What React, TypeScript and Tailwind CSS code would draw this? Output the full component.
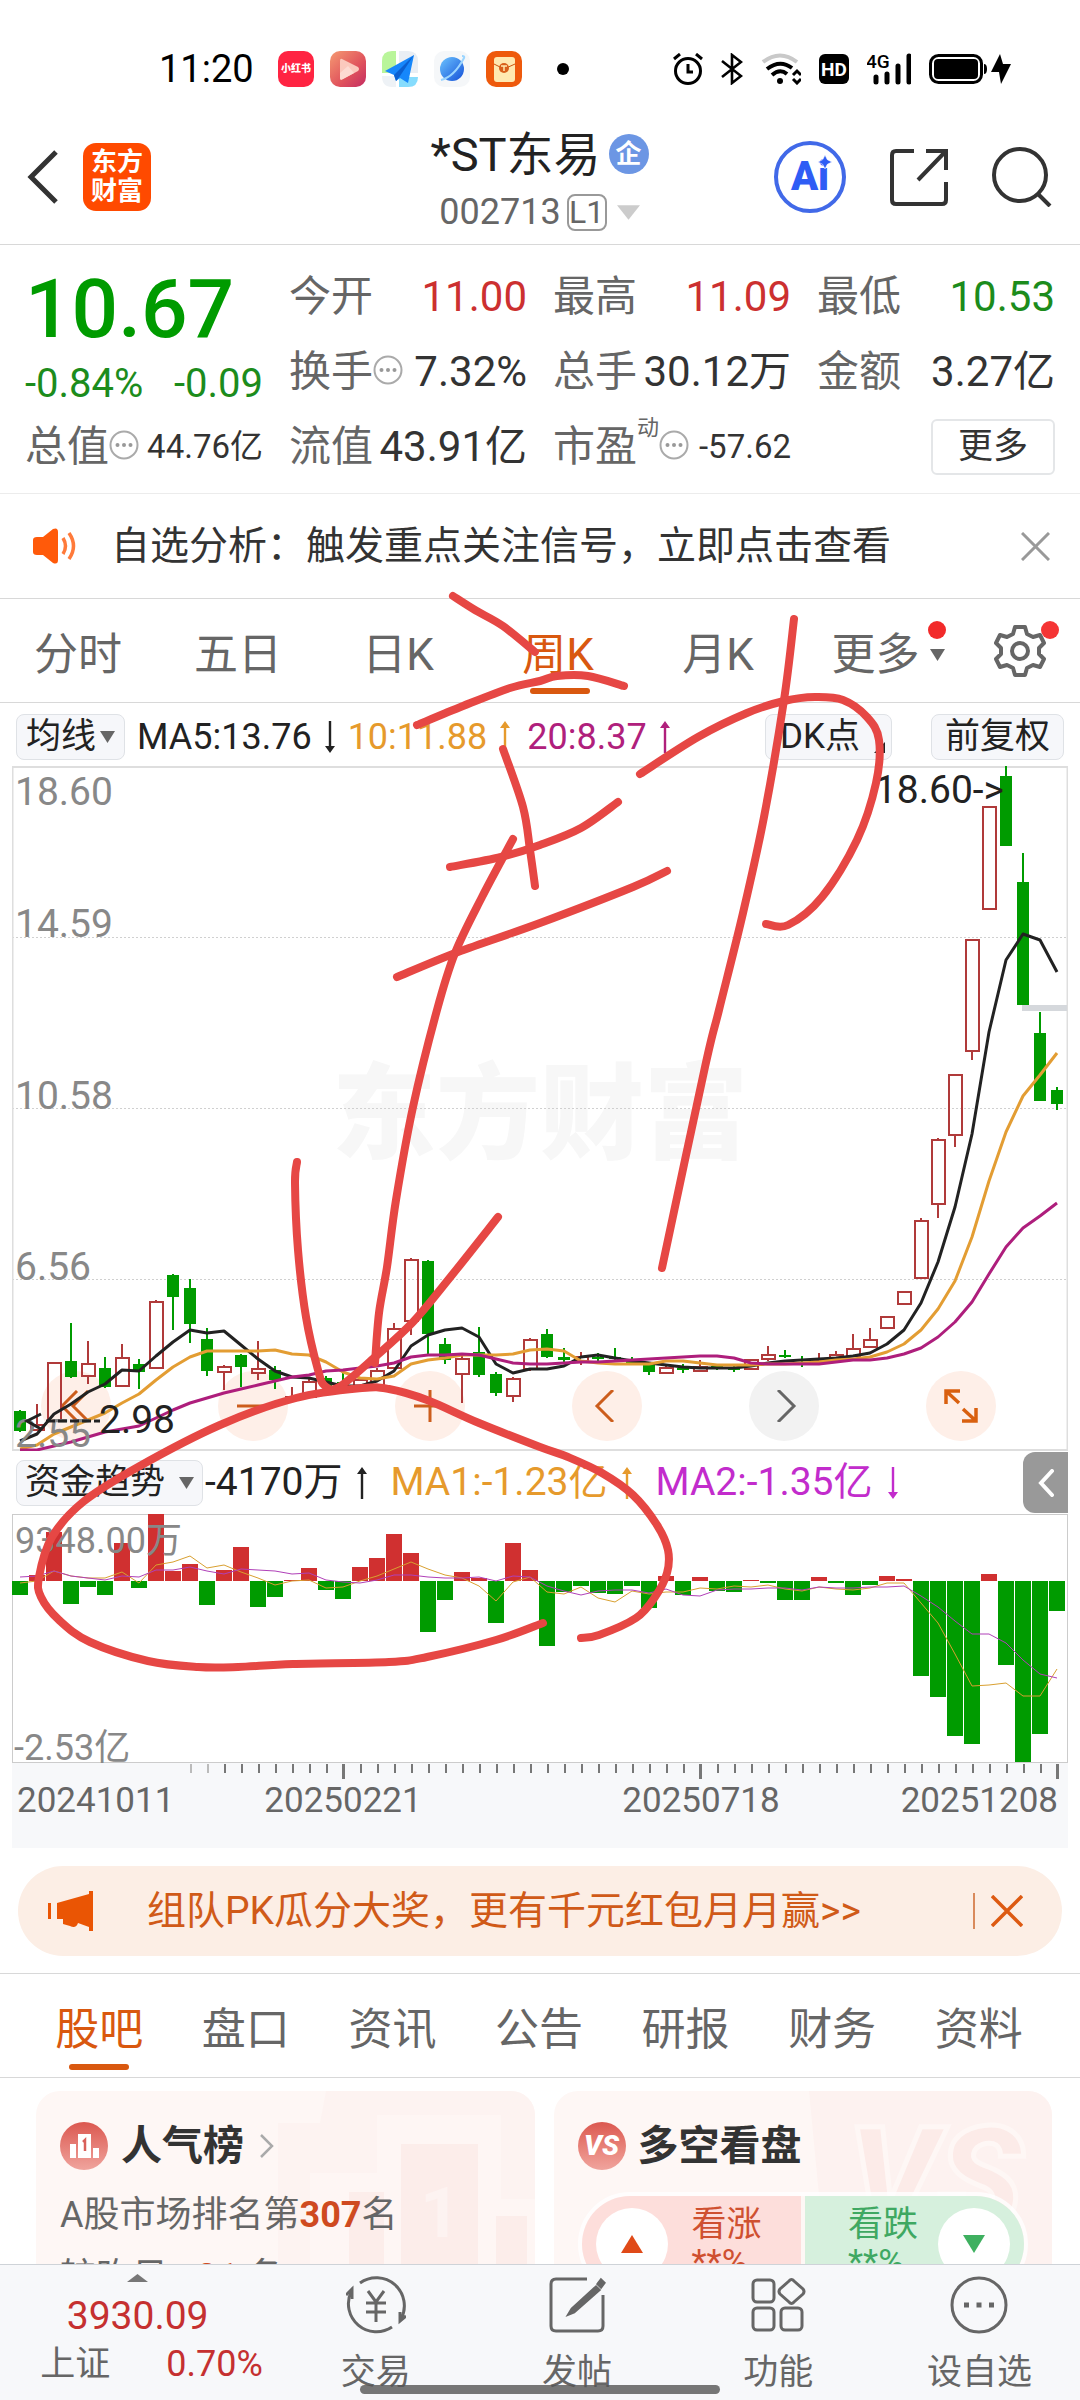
import type { ReactNode } from "react";
import clsx from "clsx";

type Point = [number, number];
// high, body top, body bottom, low, "r" rising / "g" falling
type Candle = [number, number, number, number, "r" | "g"];

const STEP = 17;
const xAt = (index: number) => 8 + index * STEP;

const candles: Candle[] = [
  [644, 645, 665, 666, "g"], [638, 658, 664, 665, "r"], [596, 596, 655, 655, "r"], [557, 595, 611, 612, "g"],
  [575, 597, 610, 618, "r"], [591, 602, 621, 622, "g"], [578, 591, 620, 620, "r"], [593, 598, 606, 623, "g"],
  [534, 535, 602, 603, "r"], [508, 509, 531, 564, "g"], [513, 522, 558, 577, "g"], [562, 573, 605, 610, "g"],
  [599, 600, 606, 624, "r"], [588, 589, 601, 621, "g"], [575, 602, 607, 614, "r"], [600, 604, 614, 623, "g"],
  [621, 630, 633, 634, "r"], [612, 615, 631, 632, "r"], [610, 612, 620, 622, "g"], [606, 616, 622, 623, "g"],
  [611, 613, 622, 623, "r"], [602, 604, 620, 621, "r"], [557, 562, 602, 603, "r"], [492, 493, 555, 569, "r"],
  [494, 495, 568, 589, "g"], [572, 578, 594, 598, "g"], [590, 592, 608, 637, "r"], [561, 586, 609, 611, "g"],
  [606, 608, 627, 630, "g"], [611, 612, 630, 636, "r"], [572, 573, 603, 605, "r"], [563, 568, 591, 592, "g"],
  [582, 591, 594, 596, "g"], [586, 590, 595, 599, "r"], [587, 591, 593, 596, "g"], [582, 591, 593, 595, "g"],
  [591, 595, 598, 599, "g"], [598, 599, 606, 609, "g"], [600, 601, 607, 608, "r"], [598, 602, 604, 607, "g"],
  [594, 600, 605, 606, "r"], [598, 600, 603, 604, "g"], [599, 602, 604, 606, "g"], [593, 593, 603, 603, "r"],
  [580, 588, 593, 595, "r"], [584, 589, 591, 592, "g"], [590, 593, 595, 601, "g"], [587, 594, 596, 598, "r"],
  [585, 588, 592, 593, "r"], [568, 582, 590, 591, "r"], [562, 573, 581, 582, "r"], [550, 550, 562, 562, "r"],
  [525, 525, 538, 538, "r"], [452, 454, 512, 512, "r"], [372, 373, 438, 452, "r"], [308, 308, 369, 381, "r"],
  [173, 173, 285, 294, "r"], [40, 40, 143, 143, "r"], [0, 10, 80, 80, "g"], [87, 116, 239, 239, "g"],
  [246, 267, 335, 335, "g"], [321, 324, 338, 344, "g"],
];

const ma5 = [
  675, 668, 648, 638, 626, 618, 604, 605, 590, 576, 564, 567, 565, 579, 593, 605, 611, 612, 616, 620, 620,
  615, 605, 580, 569, 564, 562, 571, 598, 607, 603, 603, 600, 591, 589, 592, 595, 597, 599, 601, 602, 602,
  602, 600, 597, 595, 594, 593, 592, 590, 587, 578, 564, 537, 496, 441, 368, 266, 194, 168, 174, 206,
];
const ma10 = [
  683, 679, 668, 661, 654, 647, 637, 628, 614, 601, 591, 585, 585, 585, 585, 584, 588, 589, 596, 606, 612,
  613, 610, 598, 594, 592, 589, 589, 589, 588, 584, 583, 585, 595, 597, 598, 598, 598, 595, 595, 597, 599,
  599, 599, 598, 598, 597, 596, 594, 593, 591, 586, 578, 564, 543, 515, 471, 415, 366, 330, 309, 287,
];
const ma20 = [
  684, 684, 680, 676, 671, 666, 663, 660, 652, 644, 637, 632, 627, 623, 619, 615, 611, 609, 605, 604, 602,
  600, 597, 591, 589, 589, 588, 589, 593, 597, 598, 598, 597, 596, 596, 595, 594, 593, 592, 591, 590, 590,
  592, 597, 598, 598, 598, 598, 596, 594, 594, 592, 588, 582, 571, 556, 536, 508, 481, 462, 450, 437,
];

// weekly net inflow, in px above or below the zero line
const flows = [
  -14, 6, 49, -23, -6, -14, 38, -7, 67, 10, 17, -24, 11, 34, -26, -16, 1, 13, -9, -18, 14, 23, 47, 28, -51,
  -19, 9, 3, -42, 38, 11, -65, -11, -5, -12, -13, -5, -27, 5, -14, 4, -10, -11, 1, -2, -19, -19, 4, -2,
  -14, -4, 5, 2, -95, -116, -155, -163, 7, -84, -181, -153, -30,
];
const flowMa1 = [
  69, 67, 57, 62, 64, 64, 58, 69, 51, 48, 42, 54, 51, 58, 64, 71, 67, 66, 74, 73, 67, 62, 55, 48, 55, 61,
  64, 72, 87, 68, 63, 78, 80, 73, 84, 88, 77, 80, 78, 78, 74, 75, 72, 73, 71, 75, 77, 73, 75, 76, 74, 69,
  69, 89, 109, 140, 172, 171, 169, 182, 182, 155,
];
const flowMa2 = [
  63, 62, 57, 62, 64, 66, 62, 63, 56, 56, 53, 57, 60, 55, 56, 57, 60, 59, 66, 68, 69, 66, 61, 61, 63, 64,
  64, 63, 67, 62, 63, 72, 77, 81, 77, 76, 76, 79, 75, 81, 82, 76, 75, 75, 74, 74, 76, 73, 74, 74, 73, 73,
  72, 82, 93, 107, 120, 120, 129, 146, 160, 164,
];

const scribbles: Point[][] = [
  [[453, 596], [475, 610], [503, 626], [535, 652]],
  [[417, 725], [463, 706], [510, 688], [540, 681], [557, 676], [588, 676], [624, 686]],
  [[503, 749], [523, 807], [530, 850], [535, 886]],
  [[450, 867], [501, 857], [540, 845], [581, 828], [618, 802]],
  [[397, 977], [458, 952], [540, 923], [633, 887], [667, 871]],
  [[513, 839], [482, 897], [455, 953], [437, 1010], [413, 1107], [396, 1200], [387, 1267], [379, 1313], [375, 1363]],
  [
    [297, 1162], [295, 1183], [298, 1250], [306, 1317], [318, 1370], [325, 1386], [339, 1387], [375, 1357],
    [413, 1322], [448, 1280], [498, 1217],
  ],
  [[794, 619], [784, 700], [764, 817], [743, 913], [719, 1010], [705, 1067], [662, 1268]],
  [
    [640, 774], [698, 737], [747, 713], [784, 701], [815, 697], [843, 700], [867, 717], [879, 740], [876, 783],
    [857, 840], [822, 897], [788, 925], [766, 924],
  ],
  [
    [543, 1623], [496, 1640], [427, 1657], [389, 1662], [293, 1664], [238, 1667], [198, 1667], [148, 1661],
    [90, 1642], [59, 1620], [41, 1597], [39, 1577], [52, 1537], [83, 1502], [138, 1467], [220, 1425],
    [296, 1398], [362, 1388], [389, 1389], [427, 1400], [479, 1423], [540, 1447], [568, 1457], [602, 1473],
    [633, 1495], [657, 1525], [668, 1550], [667, 1573], [655, 1597], [636, 1618], [599, 1635], [581, 1638],
  ],
];

const toLine = (values: number[]) => values.map((y, i) => `${xAt(i)},${y}`).join(" ");

// Catmull-Rom through the points, written as cubic beziers
function smooth(points: Point[]) {
  let d = `M${points[0][0]} ${points[0][1]}`;

  for (let i = 0; i < points.length - 1; i++) {
    const p0 = points[i - 1] ?? points[i];
    const p1 = points[i];
    const p2 = points[i + 1];
    const p3 = points[i + 2] ?? p2;
    const c1 = [p1[0] + (p2[0] - p0[0]) / 6, p1[1] + (p2[1] - p0[1]) / 6];
    const c2 = [p2[0] - (p3[0] - p1[0]) / 6, p2[1] - (p3[1] - p1[1]) / 6];
    d += ` C${c1.join(" ")} ${c2.join(" ")} ${p2.join(" ")}`;
  }

  return d;
}

function StatusBar() {
  return (
    <div className="flex h-[118px] shrink-0 items-center pt-5 pr-[69px] pl-[159px] text-black">
      <span className="w-[119px] text-[38px] leading-none">11:20</span>
      <div className="flex items-center gap-4">
        <span className="grid size-9 place-items-center rounded-[10px] bg-[#ff2442] text-[10px] leading-none font-black whitespace-nowrap text-white">
          小红书
        </span>
        <svg className="size-9" viewBox="0 0 36 36">
          <defs>
            <linearGradient id="play" x1="0" y1="0" x2="1" y2="1">
              <stop offset="0" stopColor="#f59a72" />
              <stop offset="0.6" stopColor="#e0525c" />
              <stop offset="1" stopColor="#c32c62" />
            </linearGradient>
          </defs>
          <rect width="36" height="36" rx="10" fill="url(#play)" />
          <path d="M12 8 Q10 7 10 10 V27 Q10 30 13 28 L28 20 Q30 18 28 16 Z" fill="#fbc9bd" />
          <path d="M10 22 L18 15 L24 22 L13 28 Q10 30 10 27Z" fill="#fddbd2" />
        </svg>
        <svg className="size-9" viewBox="0 0 36 36">
          <path d="M10 0 H14 V22 H0 V10 Q0 0 10 0" fill="#b9f59a" />
          <path d="M17 0 H26 Q36 0 36 10 V22 H17Z" fill="#e9eef4" />
          <path d="M0 25 H14 V36 H10 Q0 36 0 25" fill="#eef2f6" />
          <path d="M17 26 H36 Q36 36 26 36 H17Z" fill="#86dcfd" />
          <path d="M32 4 L3 20 L12 24 L14 30 L18 27 L26 32 Z" fill="#1687fb" />
          <path d="M32 4 L12 24 L14 30 L18 25Z" fill="#0a5fd0" />
        </svg>
        <svg className="size-9" viewBox="0 0 36 36">
          <defs>
            <linearGradient id="planet" x1="0" y1="0" x2="1" y2="1">
              <stop offset="0" stopColor="#6cc4ff" />
              <stop offset="1" stopColor="#1450d8" />
            </linearGradient>
          </defs>
          <rect width="36" height="36" rx="10" fill="#f5f7f9" />
          <circle cx="18" cy="18" r="12" fill="url(#planet)" />
          <path d="M7 29 Q20 26 30 7 Q31 5 28 5" fill="none" stroke="#9bd5ff" strokeWidth="2" />
        </svg>
        <svg className="size-9" viewBox="0 0 36 36">
          <rect width="36" height="36" rx="10" fill="#ee5a0c" />
          <rect x="8" y="6" width="21" height="25" rx="3" fill="#ffe9b0" />
          <path d="M8 13 L18 18 L29 13" fill="none" stroke="#c9550f" strokeWidth="1" />
          <circle cx="18" cy="17" r="5" fill="#d8601a" />
          <path d="M15 15 H21 M18 15 V20" stroke="#ffe9b0" strokeWidth="1.5" />
        </svg>
        <span className="ml-[19px] size-3 rounded-full bg-black" />
      </div>
      <div className="ml-auto flex items-center gap-[18px]">
        <svg className="h-8 w-[30px]" viewBox="0 0 30 32" fill="none" stroke="#000" strokeWidth="3">
          <circle cx="15" cy="18" r="12.5" />
          <path d="M15 11 V19 H20" />
          <path d="M1 6 L7 1 M29 6 L23 1" />
        </svg>
        <svg className="h-8 w-[22px]" viewBox="0 0 22 32" fill="none" stroke="#000" strokeWidth="2.6">
          <path d="M1 8 L20 23 L11 30 V2 L20 9 L1 24" />
        </svg>
        <svg className="h-8 w-10" viewBox="0 0 40 32" fill="none" strokeWidth="4">
          <path d="M2 9 Q19 -4 36 9" stroke="#c9c9c9" />
          <path d="M6 16 Q19 6 31 15" stroke="#000" />
          <path d="M11 22 Q19 15 26 21" stroke="#000" />
          <circle cx="19" cy="28" r="3" fill="#000" />
          <path d="M32 22 L36 18 L40 22 M32 26 L36 30 L40 26" stroke="#000" strokeWidth="3" />
        </svg>
        <span className="grid h-[30px] w-[30px] place-items-center rounded-md bg-black text-[19px] leading-none font-bold text-white">
          HD
        </span>
        <svg className="h-8 w-11" viewBox="0 0 44 32">
          <text x="-1" y="15" fontSize="19" fontWeight="500">4G</text>
          <path d="M9 24 V29 M20 21 V29 M31 13 V29 M42 3 V29" stroke="#000" strokeWidth="5" strokeLinecap="round" />
        </svg>
        <div className="flex items-center gap-1">
          <svg className="h-8 w-[58px]" viewBox="0 0 58 32">
            <rect x="1.5" y="2.5" width="51" height="27" rx="8" fill="none" stroke="#000" strokeWidth="3" />
            <rect x="5" y="6" width="44" height="20" rx="4" />
            <path d="M55 11 Q58 11 58 16 Q58 21 55 21Z" />
          </svg>
          <svg className="h-8 w-5" viewBox="0 0 20 32">
            <path d="M9 1 L0 19 H8 L10 31 L20 11 H12 Z" />
          </svg>
        </div>
      </div>
    </div>
  );
}

function Header() {
  return (
    <header className="grid h-[127px] shrink-0 grid-cols-[1fr_auto_1fr] items-center border-b border-[#d8d8d8] pr-7 pl-[27px]">
      <div className="flex items-center gap-6 pb-2">
        <button aria-label="返回">
          <svg className="h-[54px] w-8" viewBox="0 0 32 54" fill="none" stroke="#333" strokeWidth="5">
            <path d="M29 2 L4 27 L29 52" />
          </svg>
        </button>
        <span className="grid size-[68px] place-content-center rounded-[13px] bg-[#ff4a00] text-center text-[26px] leading-[29px] font-bold text-white">
          <span>东方</span>
          <span>财富</span>
        </span>
      </div>
      <div className="flex flex-col items-center pt-1">
        <h1 className="flex h-[58px] items-center gap-2 text-[47px] leading-none text-[#222]">
          *ST东易
          <span className="grid size-10 place-items-center rounded-full bg-[#6c96e4] text-[26px] font-bold text-white">企</span>
        </h1>
        <p className="flex h-[58px] items-center gap-[6px] text-[36px] leading-none text-[#666]">
          002713
          <span className="grid h-[37px] w-10 place-items-center rounded-lg border-2 border-[#999] text-[32px]">L1</span>
          <svg className="ml-1 h-[15px] w-[23px]" viewBox="0 0 24 15">
            <path d="M0 0 H24 L12 15Z" fill="#ccc" />
          </svg>
        </p>
      </div>
      <div className="flex items-center justify-end gap-[44px] pb-2">
        <button className="relative grid size-[72px] place-items-center rounded-full border-4 border-[#4169e8] text-[40px] leading-none font-black text-[#2f5df5]">
          Ai
          <svg className="absolute top-[10px] right-[10px] size-[14px]" viewBox="0 0 12 12">
            <path d="M6 0 L8 4 L12 6 L8 8 L6 12 L4 8 L0 6 L4 4Z" fill="#2f5df5" stroke="#fff" strokeWidth="0.5" />
          </svg>
        </button>
        <button aria-label="分享">
          <svg className="size-[58px]" viewBox="0 0 58 58" fill="none" stroke="#333" strokeWidth="4">
            <path d="M24 3 H6 Q2 3 2 7 V52 Q2 56 6 56 H52 Q56 56 56 52 V34" />
            <path d="M36 3 H56 V22 M55 4 L28 32" />
          </svg>
        </button>
        <button aria-label="搜索">
          <svg className="size-[60px]" viewBox="0 0 60 60" fill="none" stroke="#333" strokeWidth="4">
            <circle cx="28" cy="28" r="26" />
            <path d="M46 47 L58 59" />
          </svg>
        </button>
      </div>
    </header>
  );
}

function InfoDots() {
  return (
    <svg className="mb-1 size-[30px]" viewBox="0 0 30 30">
      <circle cx="15" cy="15" r="13.5" fill="none" stroke="#aaa" strokeWidth="2" />
      <circle cx="8.5" cy="15" r="2" fill="#999" />
      <circle cx="15" cy="15" r="2" fill="#999" />
      <circle cx="21.5" cy="15" r="2" fill="#999" />
    </svg>
  );
}

function Quote({ label, value, tone = "text-[#333]", small, extra }: {
  label: string;
  value: string;
  tone?: string;
  small?: boolean;
  extra?: ReactNode;
}) {
  return (
    <div className="flex h-[75px] items-center whitespace-nowrap">
      <span className="text-[42px] leading-none text-[#666]">{label}</span>
      {extra}
      <span className={clsx("ml-auto leading-none", tone, small ? "text-[33px]" : "text-[42px]")}>{value}</span>
    </div>
  );
}

function Quotes() {
  return (
    <section className="grid shrink-0 grid-cols-4 gap-x-[26px] border-b border-[#ececec] px-[25px] pt-[14px] pb-[9px]">
      <div className="row-span-2 text-[#009b00]">
        <div className="flex h-[100px] items-center text-[82px] leading-none font-medium">10.67</div>
        <div className="flex h-[50px] items-center justify-between text-[40px] leading-none text-[#1c8c1c]">
          <span>-0.84%</span>
          <span>-0.09</span>
        </div>
      </div>
      <Quote label="今开" value="11.00" tone="text-[#cc3030]" />
      <Quote label="最高" value="11.09" tone="text-[#cc3030]" />
      <Quote label="最低" value="10.53" tone="text-[#1c8c1c]" />
      <Quote label="换手" value="7.32%" extra={<InfoDots />} />
      <Quote label="总手" value="30.12万" />
      <Quote label="金额" value="3.27亿" />
      <Quote label="总值" value="44.76亿" small extra={<InfoDots />} />
      <Quote label="流值" value="43.91亿" />
      <Quote
        label="市盈"
        value="-57.62"
        small
        extra={
          <>
            <span className="mt-2 self-start text-[22px] leading-none text-[#666]">动</span>
            <InfoDots />
          </>
        }
      />
      <div className="flex h-[75px] items-center justify-end">
        <button className="h-14 w-[124px] rounded-md border-2 border-[#e4e6e8] text-[35px] leading-none text-[#333]">更多</button>
      </div>
    </section>
  );
}

function Notice() {
  return (
    <section className="flex h-[105px] shrink-0 items-center border-b border-[#d8d8d8] pr-[30px] pl-[33px]">
      <svg className="h-9 w-[46px]" viewBox="0 0 46 36">
        <path d="M0 12 Q0 9 4 9 H10 L20 1 Q25 -1 25 4 V32 Q25 37 20 35 L10 27 H4 Q0 27 0 24Z" fill="#ff5a0a" />
        <path d="M30 10 Q35 18 30 26 M36 5 Q45 18 36 31" fill="none" stroke="#ff7a3a" strokeWidth="3.5" />
      </svg>
      <p className="ml-8 text-[39px] leading-none text-[#333]">自选分析：触发重点关注信号，立即点击查看</p>
      <button className="ml-auto" aria-label="关闭">
        <svg className="size-[29px]" viewBox="0 0 29 29" stroke="#999" strokeWidth="3">
          <path d="M1 1 L28 28 M28 1 L1 28" />
        </svg>
      </button>
    </section>
  );
}

const periods = ["分时", "五日", "日K", "周K", "月K"];

function PeriodTabs() {
  return (
    <nav className="grid h-[104px] shrink-0 grid-cols-[repeat(6,4fr)_3fr] border-b border-[#d8d8d8] text-[44px] leading-none text-[#666]">
      {periods.map((period) => (
        <button key={period} className={clsx("relative pt-2 pr-1", period === "周K" && "text-[#d9580f]")}>
          {period}
          {period === "周K" && (
            <span className="absolute bottom-2 left-1/2 h-[6px] w-[60px] -translate-x-1/2 rounded-full bg-[#d9580f]" />
          )}
        </button>
      ))}
      <button className="relative flex items-center justify-center pt-2 pl-4">
        更多
        <svg className="ml-[10px] h-3 w-[15px]" viewBox="0 0 15 12">
          <path d="M0 0 H15 L7.5 12Z" fill="#666" />
        </svg>
        <span className="absolute top-[22px] right-[14px] size-[18px] rounded-full bg-[#f22a2a]" />
      </button>
      <button className="relative grid place-items-center" aria-label="设置">
        <svg className="size-[52px]" viewBox="0 0 52 52" fill="none" stroke="#666" strokeWidth="4" strokeLinejoin="round">
          <path d="M21 2 H31 L33 9 L39 12 L46 10 L50 18 L45 23 V29 L50 34 L46 42 L39 40 L33 43 L31 50 H21 L19 43 L13 40 L6 42 L2 34 L7 29 V23 L2 18 L6 10 L13 12 L19 9Z" />
          <circle cx="26" cy="26" r="8" />
        </svg>
        <span className="absolute top-[22px] right-[21px] size-[18px] rounded-full bg-[#f53535]" />
      </button>
    </nav>
  );
}

function Arrow({ down }: { down?: boolean }) {
  return (
    <svg className="h-8 w-3" viewBox="0 0 12 32">
      <path
        d={down ? "M4.8 0 H7.2 V25 H11 L6 32 L1 25 H4.8Z" : "M4.8 32 H7.2 V7 H11 L6 0 L1 7 H4.8Z"}
        fill="currentColor"
      />
    </svg>
  );
}

const chipStyle = "flex h-[46px] items-center rounded-lg border border-[#dfe2e6] bg-[#f6f7fa] text-[35px] leading-none text-[#222]";

function ChartToolbar() {
  return (
    <div className="flex h-[63px] items-center pt-1 pr-4 pl-4 text-[36px] leading-none whitespace-nowrap">
      <button className={clsx(chipStyle, "gap-1 px-[9px]")}>
        均线
        <svg className="h-3 w-[15px]" viewBox="0 0 15 12">
          <path d="M0 0 H15 L7.5 12Z" fill="#666" />
        </svg>
      </button>
      <span className="ml-3 flex items-center gap-3 text-[#222]">MA5:13.76<Arrow down /></span>
      <span className="ml-3 flex items-center gap-3 text-[#e69a2c]">10:11.88<Arrow /></span>
      <span className="ml-4 flex items-center gap-3 text-[#b0207c]">20:8.37<Arrow /></span>
      <button className={clsx(chipStyle, "relative ml-auto w-[127px] pl-[14px]")}>
        DK点
        <svg className="absolute right-[6px] bottom-[6px] size-[11px]" viewBox="0 0 11 11">
          <path d="M11 0 V11 H0Z" fill="#222" />
        </svg>
      </button>
      <button className={clsx(chipStyle, "ml-[39px] px-[13px]")}>前复权</button>
    </div>
  );
}

const roundButton = "grid size-[70px] place-items-center rounded-full bg-[#feefe8]";

function ChartButtons() {
  return (
    <div className="absolute right-[72px] bottom-[10px] left-[29px] flex justify-between">
      <button className={roundButton} aria-label="最前">
        <svg className="size-8" viewBox="0 0 32 32" fill="none" stroke="#cc5d1c" strokeWidth="3">
          <path d="M17 1 L2 16 L17 31 M28 1 L13 16 L28 31" />
        </svg>
      </button>
      <button className={roundButton} aria-label="缩小">
        <svg className="size-8" viewBox="0 0 32 32" stroke="#cc5d1c" strokeWidth="3">
          <path d="M0 16 H32" />
        </svg>
      </button>
      <button className={roundButton} aria-label="放大">
        <svg className="size-8" viewBox="0 0 32 32" stroke="#cc5d1c" strokeWidth="3">
          <path d="M0 16 H32 M16 0 V32" />
        </svg>
      </button>
      <button className={roundButton} aria-label="向前">
        <svg className="size-8" viewBox="0 0 32 32" fill="none" stroke="#cc5d1c" strokeWidth="3">
          <path d="M22 0 L6 16 L22 32" />
        </svg>
      </button>
      <button className="grid size-[70px] place-items-center rounded-full bg-[#f2f2f2]" aria-label="向后">
        <svg className="size-8" viewBox="0 0 32 32" fill="none" stroke="#666" strokeWidth="3">
          <path d="M10 0 L26 16 L10 32" />
        </svg>
      </button>
      <button className={roundButton} aria-label="全屏">
        <svg className="size-[34px]" viewBox="0 0 34 34" fill="none" stroke="#d9600f" strokeWidth="3.5">
          <path d="M2 15 V2 H16 M2 2 L15 14 M32 19 V32 H18 M32 32 L19 20" />
        </svg>
      </button>
    </div>
  );
}

function CandleChart() {
  return (
    <div className="relative">
      <ChartButtons />
      <svg className="pointer-events-none relative w-full" viewBox="0 0 1056 685" fill="none">
        <text x="320" y="385" fontSize="104" fontWeight="900" fill="#f7f7f7">东方财富</text>
        <g stroke="#d0d0d0" strokeWidth="1" strokeDasharray="2 2">
          <path d="M0 171.5 H1056 M0 342.5 H1056 M0 513.5 H1056" />
        </g>
        <rect x="0.5" y="1" width="1055" height="683" stroke="#dedede" strokeWidth="2" />
        <rect x="1010" y="239" width="45" height="6" fill="#d5d8dc" />
        {candles.map(([high, top, bottom, low, kind], i) => {
          const x = xAt(i);
          const height = Math.max(bottom - top, 2);

          return kind === "g" ? (
            <g key={i} fill="#009b00">
              <rect x={x - 1} y={high} width="2" height={low - high} />
              <rect x={x - 6} y={top} width="12" height={height} />
            </g>
          ) : (
            <g key={i} stroke="#b03a3a" strokeWidth="2">
              <path d={`M${x} ${high} V${top} M${x} ${bottom} V${low}`} />
              <rect x={x - 6} y={top + 1} width="13" height={height - 1} />
            </g>
          );
        })}
        <g strokeWidth="3" strokeLinejoin="round">
          <polyline points={toLine(ma5)} stroke="#222" />
          <polyline points={toLine(ma10)} stroke="#e39d33" />
          <polyline points={toLine(ma20)} stroke="#ae1e7c" />
        </g>
        <g fontSize="39" fill="#888">
          <text x="3" y="39">18.60</text>
          <text x="3" y="171">14.59</text>
          <text x="3" y="343">10.58</text>
          <text x="3" y="514">6.56</text>
          <text x="3" y="681">2.55</text>
        </g>
        <text x="992" y="37" fontSize="39" textAnchor="end" fill="#222">18.60-&gt;</text>
        <path d="M29 648 L15 655 L29 663" stroke="#222" strokeWidth="3" />
        <path d="M34 655 H88" stroke="#222" strokeWidth="3" strokeDasharray="9 3" />
        <text x="87" y="667" fontSize="39" fill="#222">2.98</text>
      </svg>
    </div>
  );
}

function FlowToolbar() {
  return (
    <div className="flex h-[63px] items-center pl-4 text-[39px] leading-none whitespace-nowrap">
      <button className={clsx(chipStyle, "gap-[14px] px-[8px]")}>
        资金趋势
        <svg className="h-3 w-[15px]" viewBox="0 0 15 12">
          <path d="M0 0 H15 L7.5 12Z" fill="#666" />
        </svg>
      </button>
      <span className="ml-[2px] flex items-center gap-[14px] text-[#222]">-4170万<Arrow /></span>
      <span className="ml-[22px] flex items-center gap-[14px] text-[#e69a2c]">MA1:-1.23亿<Arrow /></span>
      <span className="ml-[22px] flex items-center gap-[14px] text-[#c22ccc]">MA2:-1.35亿<Arrow down /></span>
      <button className="ml-auto grid h-[61px] w-[45px] place-items-center rounded-l-xl bg-[#999]" aria-label="展开">
        <svg className="h-7 w-4" viewBox="0 0 16 28" fill="none" stroke="#fff" strokeWidth="4" strokeLinecap="round">
          <path d="M14 2 L3 14 L14 26" />
        </svg>
      </button>
    </div>
  );
}

function FlowChart() {
  return (
    <>
      <svg className="w-full" viewBox="0 0 1056 249" fill="none">
        <rect x="0.5" y="0.5" width="1055" height="248" stroke="#ccc" />
        {flows.map((flow, i) => (
          <rect
            key={i}
            x={xAt(i) - 8}
            y={flow > 0 ? 67 - flow : 67}
            width="16"
            height={Math.abs(flow)}
            fill={flow > 0 ? "#d03030" : "#009b00"}
          />
        ))}
        <polyline points={toLine(flowMa1)} stroke="#d9a030" />
        <polyline points={toLine(flowMa2)} stroke="#b040b8" />
        <g fontSize="36" fill="#888">
          <text x="3" y="39">9348.00万</text>
          <text x="2" y="246">-2.53亿</text>
        </g>
      </svg>
      <svg className="w-full bg-[#f7f8fa]" viewBox="0 0 1056 85">
        {candles.map((_, i) => {
          if (i < 10) return null;
          const major = i === 19 || i === 40 || i === 61;

          return (
            <rect
              key={i}
              x={xAt(i) + (major ? -1 : 0)}
              y="1"
              width={major ? 3 : 2}
              height={major ? 15 : 9}
              fill={i < 12 ? "#bbb" : "#777"}
            />
          );
        })}
        <g fontSize="35" fill="#666">
          <text x="5" y="49">20241011</text>
          <text x="331" y="49" textAnchor="middle">20250221</text>
          <text x="689" y="49" textAnchor="middle">20250718</text>
          <text x="1046" y="49" textAnchor="end">20251208</text>
        </g>
      </svg>
    </>
  );
}

function Promo() {
  return (
    <section className="mx-[18px] mt-[18px] mb-[17px] flex h-[90px] shrink-0 items-center rounded-full bg-[#fceee5] pr-[39px] pl-[30px] text-[#d05a18]">
      <svg className="h-10 w-[46px]" viewBox="0 0 46 40" fill="#ea5504">
        <path d="M0 12 H3 V28 H0Z M9 12 L41 3 V0 H45 V40 H41 V36 L30 32 Q28 38 22 35 L15 33 V28 H9Z" />
      </svg>
      <a href="#promo" className="ml-[53px] text-[39px] leading-none">组队PK瓜分大奖，更有千元红包月月赢&gt;&gt;</a>
      <span className="ml-auto h-9 w-[2px] bg-[#d98a5c]" />
      <button className="ml-4" aria-label="关闭">
        <svg className="size-8" viewBox="0 0 32 32" stroke="#dd5a12" strokeWidth="3.5">
          <path d="M1 1 L31 31 M31 1 L1 31" />
        </svg>
      </button>
    </section>
  );
}

const sections = ["股吧", "盘口", "资讯", "公告", "研报", "财务", "资料"];

function SectionTabs() {
  return (
    <nav className="grid h-[105px] shrink-0 grid-cols-7 border-y border-[#d8d8d8] pr-7 pl-[26px] text-[44px] leading-none text-[#666]">
      {sections.map((section, i) => (
        <button key={section} className={clsx("relative pt-2", i === 0 && "text-[#d9580f]")}>
          {section}
          {i === 0 && (
            <span className="absolute bottom-[7px] left-1/2 h-[6px] w-[60px] -translate-x-1/2 rounded-full bg-[#d9580f]" />
          )}
        </button>
      ))}
    </nav>
  );
}

function PopularityCard() {
  return (
    <article className="relative h-[240px] overflow-hidden rounded-[24px] bg-[#fef7f5] px-[24px] pt-[27px]">
      <svg className="absolute top-0 right-0 h-[240px] w-[260px]" viewBox="0 0 260 240">
        <path d="M51 0 H260 V240 H3 V32 H45Z" fill="#fdf3f1" />
        <path d="M102 24 H226 V240 H102Z M35 82 H110 V240 H35Z M226 108 H260 V240 H226Z" fill="#fef6f4" />
        <path d="M126 53 H203 V240 H126Z M74 101 H109 V240 H74Z M221 125 H252 V240 H221Z" fill="#fcedea" />
        <text x="145" y="146" fontSize="70" fontWeight="700" fill="#fdf3f1">1</text>
      </svg>
      <h2 className="relative flex h-14 items-center text-[41px] leading-none font-bold text-[#333]">
        <svg className="mr-[13px] size-12" viewBox="0 0 48 48">
          <defs>
            <linearGradient id="badge" x1="0" y1="0" x2="0" y2="1">
              <stop offset="0" stopColor="#db5850" />
              <stop offset="1" stopColor="#f0a49d" />
            </linearGradient>
          </defs>
          <circle cx="24" cy="24" r="24" fill="url(#badge)" />
          <path d="M10 22 H16 V36 H10Z M18 12 H31 V36 H18Z M33 26 H39 V36 H33Z" fill="#fff" />
          <path d="M23 20 L25 18 V29" stroke="#d9605a" strokeWidth="2.5" fill="none" />
        </svg>
        人气榜
        <svg className="ml-4 h-6 w-[14px]" viewBox="0 0 14 24" fill="none" stroke="#aaa" strokeWidth="2.5">
          <path d="M1 1 L12 12 L1 23" />
        </svg>
      </h2>
      <p className="relative mt-[10px] text-[36px] leading-[62px] text-[#666]">
        A股市场排名第<b className="text-[#cf4a20]">307</b>名
      </p>
      <p className="relative text-[36px] leading-[62px] text-[#666]">
        较昨日 <b className="text-[#cf4a20]">+21</b> 名
      </p>
    </article>
  );
}

function SentimentCard() {
  return (
    <article className="relative h-[240px] overflow-hidden rounded-[24px] bg-[#fef7f5] px-[24px] pt-[27px]">
      <svg className="absolute top-0 right-0 h-[240px] w-[260px]" viewBox="0 0 260 240">
        <path d="M17 0 H260 V240 H40Z" fill="#fdf2f0" />
        <text x="56" y="136" fontSize="140" fontWeight="900" fontStyle="italic" fill="#fcebe8" stroke="#fef7f5" strokeWidth="5">VS</text>
      </svg>
      <h2 className="relative flex h-14 items-center text-[41px] leading-none font-bold text-[#333]">
        <span className="mr-3 grid size-12 place-items-center rounded-full bg-linear-to-b from-[#db5850] to-[#f0a49d] text-[28px] font-black text-white italic">
          VS
        </span>
        多空看盘
      </h2>
      <div className="relative mt-[18px] flex rounded-full border-4 border-white/80 leading-[38px]">
        <button className="flex h-[96px] flex-1 items-center gap-[24px] rounded-l-full bg-[#fddedb] pl-[14px] text-[#cf5030]">
          <span className="grid size-[72px] place-items-center rounded-full bg-white">
            <svg className="h-[18px] w-[22px]" viewBox="0 0 22 18">
              <path d="M11 0 L22 18 H0Z" fill="#e04a18" />
            </svg>
          </span>
          <span className="flex flex-col items-start text-[35px]">
            <span>看涨</span>
            <span>**%</span>
          </span>
        </button>
        <button className="ml-1 flex h-[96px] flex-1 items-center justify-end gap-[20px] rounded-r-full bg-[#d6f0dd] pr-[14px] text-[#3fa862]">
          <span className="flex flex-col items-start text-[35px]">
            <span>看跌</span>
            <span>**%</span>
          </span>
          <span className="grid size-[72px] place-items-center rounded-full bg-white">
            <svg className="h-[18px] w-[22px]" viewBox="0 0 22 18">
              <path d="M0 0 H22 L11 18Z" fill="#3fb060" />
            </svg>
          </span>
        </button>
      </div>
    </article>
  );
}

function NavItem({ label, children }: { label: string; children: ReactNode }) {
  return (
    <button className="flex flex-col items-center pt-[10px] text-[35px] leading-none text-[#666]">
      <svg className="size-[60px]" viewBox="0 0 60 60" fill="none" stroke="#666" strokeWidth="3">
        {children}
      </svg>
      <span className="mt-5">{label}</span>
    </button>
  );
}

function BottomNav() {
  return (
    <footer className="relative grid h-[136px] shrink-0 grid-cols-[275fr_repeat(4,201fr)] border-t border-[#cfd3d8] bg-[#f7f8fa]">
      <button className="flex flex-col items-center pt-[9px] text-[36px] leading-none text-[#c53030]">
        <svg className="h-2 w-[21px] -translate-x-0" viewBox="0 0 21 8">
          <path d="M10.5 0 L21 8 H0Z" fill="#777" />
        </svg>
        <span className="mt-[15px] text-[39px]">3930.09</span>
        <span className="mt-[10px] flex items-center gap-14 pl-7">
          <span className="text-[35px] text-[#666]">上证</span>
          0.70%
        </span>
      </button>
      <NavItem label="交易">
        <path d="M14 8 A28 28 0 0 1 55 44 M46 52 A28 28 0 0 1 5 17" />
        <path d="M0 20 L6 14 V24 M60 41 L54 46 V37" />
        <path d="M22 16 L30 27 L38 16 M20 28 H40 M20 37 H40 M30 27 V47" />
      </NavItem>
      <NavItem label="发帖">
        <path d="M40 4 H9 Q4 4 4 9 V51 Q4 56 9 56 H51 Q56 56 56 51 V20" />
        <path d="M49 12 L25 34 L22 39 L27 37 L52 15Z M51 9 L54 5 L57 8 L54 12Z" fill="#666" />
      </NavItem>
      <NavItem label="功能">
        <rect x="5" y="5" width="21" height="22" rx="4" />
        <rect x="5" y="33" width="21" height="22" rx="4" />
        <rect x="33" y="33" width="21" height="22" rx="4" />
        <path d="M41 6 Q43.5 3 46 6 L55 14 Q57 16.5 55 19 L46 27 Q43.5 30 41 27 L32 19 Q30 16.5 32 14Z" />
      </NavItem>
      <NavItem label="设自选">
        <circle cx="30" cy="30" r="27" />
        <path d="M15 30 H20 M27.5 30 H32.5 M40 30 H45" strokeWidth="5" />
      </NavItem>
      <span className="absolute bottom-[6px] left-1/2 h-[9px] w-1/3 -translate-x-1/2 rounded-full bg-[#555]/80" />
    </footer>
  );
}

export default function App() {
  return (
    <div className="relative flex h-screen flex-col overflow-hidden bg-white font-[Roboto,'Noto_Sans_CJK_SC',sans-serif]">
      <StatusBar />
      <Header />
      <main className="min-h-0 flex-1 overflow-hidden">
        <Quotes />
        <Notice />
        <PeriodTabs />
        <section>
          <ChartToolbar />
          <div className="mx-3">
            <CandleChart />
          </div>
          <div className="mr-3">
            <FlowToolbar />
          </div>
          <div className="mx-3">
            <FlowChart />
          </div>
        </section>
        <Promo />
        <SectionTabs />
        <section className="grid grid-cols-2 gap-[19px] pt-[13px] pr-[28px] pl-[36px]">
          <PopularityCard />
          <SentimentCard />
        </section>
      </main>
      <BottomNav />
      <svg
        className="pointer-events-none absolute top-0 left-0 w-full"
        viewBox="0 0 1080 2400"
        fill="none"
        stroke="#e64744"
        strokeWidth="8"
        strokeLinecap="round"
        strokeLinejoin="round"
      >
        {scribbles.map((points, i) => (
          <path key={i} d={smooth(points)} />
        ))}
      </svg>
    </div>
  );
}
